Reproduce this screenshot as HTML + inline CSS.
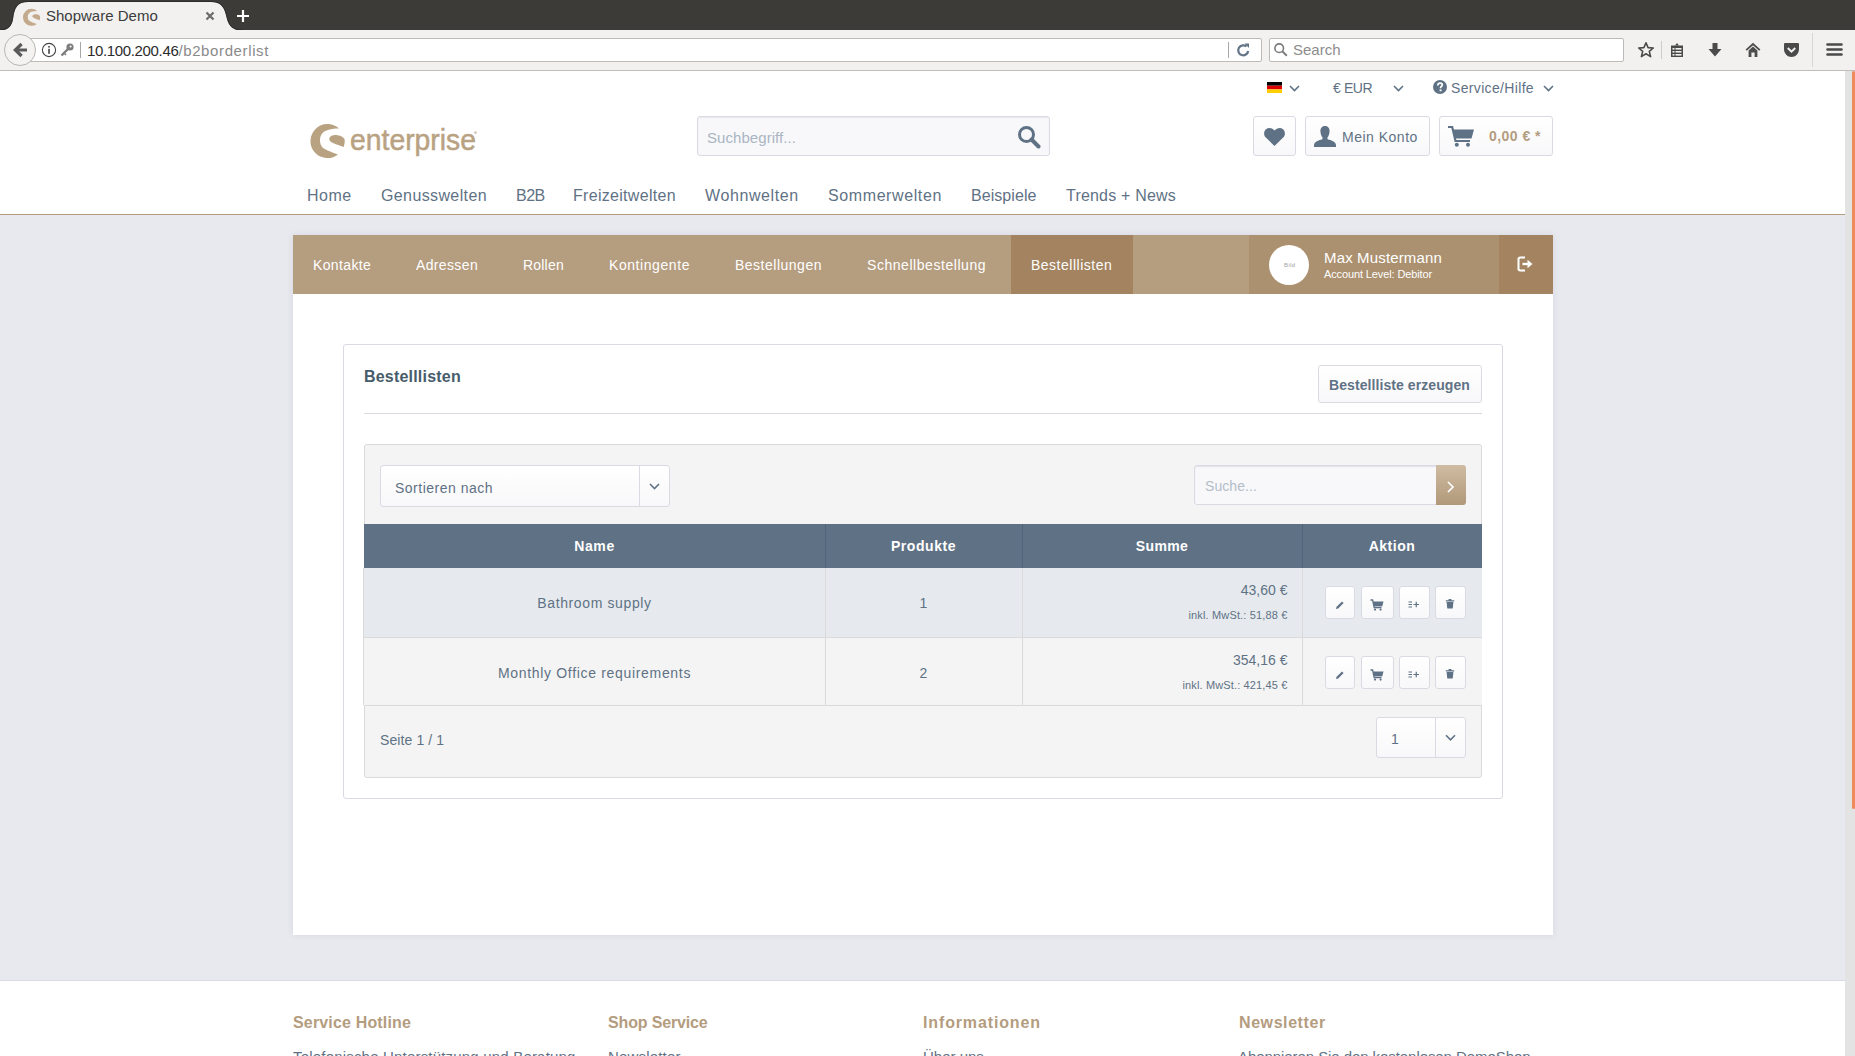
<!DOCTYPE html>
<html><head><meta charset="utf-8">
<style>
*{box-sizing:border-box;margin:0;padding:0}
html,body{width:1855px;height:1056px;overflow:hidden;font-family:"Liberation Sans",sans-serif;background:#e8e9ee}
.abs{position:absolute}
#tabbar{position:absolute;left:0;top:0;width:1855px;height:30px;background:#3c3b37}
#navbar{position:absolute;left:0;top:30px;width:1855px;height:41px;background:#f2f1f0;border-bottom:1px solid #bfbdb9}
#page{position:absolute;left:0;top:71px;width:1845px;height:985px;background:#e8e9ee;overflow:hidden}
#header{position:absolute;left:0;top:0;width:1845px;height:144px;background:#fff;border-bottom:1px solid #b49c7f}
.txt{position:absolute;white-space:nowrap;line-height:1}
.t{position:absolute;white-space:nowrap;line-height:1;color:#5f7285}
.btn{position:absolute;background:linear-gradient(#fff,#f8f8fa);border:1px solid #dadae5;border-radius:3px}
.nav{font-size:16px}
.anav{top:258.3px;font-size:14px;color:#fff}
.th{top:539.1px;font-size:14px;font-weight:bold;color:#fff;text-align:center}
.td{font-size:14px;text-align:center}
.fh{top:1014.8px;font-size:16px;font-weight:bold;color:#b49c7f}
.ft{top:1049.3px;font-size:15px;color:#5f7285}
</style></head><body>
<div id="tabbar">
  <svg class="abs" style="left:0;top:0" width="260" height="31">
    <path d="M0 30.5 C8 30.5 12 26 13 19 C14.5 8 17 2 28 2 L211 2 C221.5 2 224.5 8 226.5 17 C228.5 26 232.5 30.5 242 30.5 Z" fill="#f2f1f0"/><path d="M-1 30 C7.5 30 11.5 26 12.5 19 C14 8 16.5 1.5 28 1.5 L211 1.5 C222 1.5 225 8 227 17 C229 26 233 30 243 30" fill="none" stroke="#262522" stroke-width="1" opacity="0.7"/>
  </svg>
  <svg class="abs" style="left:23px;top:7.5px" width="18" height="18" viewBox="0 0 36 36">
    <path d="M30 8.6 A17 17 0 1 0 29 34.4 C24 32.5 17 30.5 13.5 27.5 C10.5 24.5 10.2 18 12.5 14.5 C14.5 11 20 8.6 30 8.6 Z" fill="#c3aa8c" transform="translate(-1.5,-2.5)"/>
    <path d="M20.3 18.7 C21 15.5 25 14.8 28.5 15.2 C32 15.6 35 17.5 35.6 19.5 C36 22 35.4 25 34.6 27 C31 25.5 27.5 24.5 24.5 23.2 C21.5 22 20 20.5 20.3 18.7 Z" fill="#c3aa8c" transform="translate(-1.5,-2.5)"/>
  </svg>
  <div class="txt" style="left:46px;top:8px;font-size:15px;color:#3c3c3c">Shopware Demo</div>
  <svg class="abs" style="left:205px;top:11px" width="10" height="10"><path d="M1.5 1.5 L8.5 8.5 M8.5 1.5 L1.5 8.5" stroke="#6b6b6b" stroke-width="2.2"/></svg>
  <svg class="abs" style="left:236px;top:9px" width="14" height="14"><path d="M7 1 V13 M1 7 H13" stroke="#fff" stroke-width="2.2"/></svg>
</div>
<div id="navbar">
  <!-- url bar -->
  <div class="abs" style="left:26px;top:8px;width:1236px;height:24px;background:#fff;border:1px solid #bdbbb7;border-radius:2px"></div>
  <svg class="abs" style="left:3px;top:3px" width="34" height="34">
    <circle cx="17" cy="17" r="15.5" fill="#f4f3f2" stroke="#b9b7b3" stroke-width="1"/>
    <path d="M18.6 11 L12.4 17 L18.6 23" stroke="#5a5a5a" stroke-width="3.3" fill="none"/><path d="M13 17 H24" stroke="#5a5a5a" stroke-width="3"/>
  </svg>
  <svg class="abs" style="left:41px;top:12px" width="16" height="16"><circle cx="8" cy="8" r="6.6" fill="none" stroke="#444" stroke-width="1.1"/><rect x="7.2" y="6.8" width="1.6" height="5" fill="#444"/><rect x="7.2" y="4" width="1.6" height="1.6" fill="#444"/></svg>
  <svg class="abs" style="left:59px;top:12px" width="16" height="16"><circle cx="11" cy="5" r="3.6" fill="#7d7d7d"/><circle cx="11.6" cy="4.4" r="1" fill="#fff"/><path d="M9 7 L2.5 13.5" stroke="#7d7d7d" stroke-width="2.4"/><path d="M5 11 L7 13" stroke="#7d7d7d" stroke-width="1.6"/></svg>
  <div class="abs" style="left:80px;top:12px;width:1px;height:16px;background:#a7a7a7"></div>
  <div class="txt" style="left:87px;top:13px;font-size:15px;color:#2b2b2b;letter-spacing:-0.35px">10.100.200.46<span style="color:#8a8a8a;letter-spacing:0.62px">/b2borderlist</span></div>
  <div class="abs" style="left:1228px;top:12px;width:1px;height:16px;background:#a7a7a7"></div>
  <svg class="abs" style="left:1236px;top:12px" width="16" height="16"><path d="M12.2 9 A5 5 0 1 1 10.5 4.5" fill="none" stroke="#637486" stroke-width="2.2"/><path d="M8.5 1.5 L13 1.5 L13 6 Z" fill="#637486"/></svg>
  <!-- search -->
  <div class="abs" style="left:1269px;top:8px;width:355px;height:24px;background:#fff;border:1px solid #bdbbb7;border-radius:2px"></div>
  <svg class="abs" style="left:1273px;top:12px" width="16" height="16"><circle cx="6.2" cy="6.2" r="4.3" fill="none" stroke="#7a7a7a" stroke-width="1.6"/><path d="M9.4 9.4 L13.8 13.8" stroke="#7a7a7a" stroke-width="2"/></svg>
  <div class="txt" style="left:1293px;top:12px;font-size:15px;color:#8c8c8c">Search</div>
  <!-- toolbar icons -->
  <svg class="abs" style="left:1637px;top:11px" width="18" height="18"><path d="M9 1.8 L11.1 6.6 L16.3 7 L12.3 10.4 L13.6 15.6 L9 12.8 L4.4 15.6 L5.7 10.4 L1.7 7 L6.9 6.6 Z" fill="none" stroke="#4a4a4a" stroke-width="1.6" stroke-linejoin="round"/></svg>
  <div class="abs" style="left:1661px;top:11px;width:1px;height:18px;background:#cfcdca"></div>
  <svg class="abs" style="left:1669px;top:11px" width="16" height="18"><path d="M2 4.5 H14 V16 H2 Z" fill="#4a4a4a"/><path d="M6 4.5 L8 2 L10 4.5Z" fill="#4a4a4a"/><rect x="3.5" y="7" width="2" height="1.6" fill="#f2f1f0"/><rect x="6.5" y="7" width="6" height="1.6" fill="#f2f1f0"/><rect x="3.5" y="10" width="2" height="1.6" fill="#f2f1f0"/><rect x="6.5" y="10" width="6" height="1.6" fill="#f2f1f0"/><rect x="3.5" y="13" width="2" height="1.6" fill="#f2f1f0"/><rect x="6.5" y="13" width="6" height="1.6" fill="#f2f1f0"/></svg>
  <svg class="abs" style="left:1707px;top:12px" width="16" height="16"><path d="M5.5 1 H10.5 V7 H14.5 L8 14.5 L1.5 7 H5.5 Z" fill="#4a4a4a"/></svg>
  <svg class="abs" style="left:1745px;top:12px" width="16" height="16"><path d="M1.2 8.2 L8 2 L14.8 8.2" fill="none" stroke="#4d4d4d" stroke-width="1.8"/><path d="M3.6 8.6 L8 4.6 L12.4 8.6 V15 H9.6 V10.6 H6.4 V15 H3.6 Z" fill="#4d4d4d"/></svg>
  <svg class="abs" style="left:1783px;top:12px" width="17" height="16"><path d="M1 2.2 C1 1.5 1.5 1 2.2 1 H14.8 C15.5 1 16 1.5 16 2.2 V7 C16 11.5 12.5 15 8.5 15 C4.5 15 1 11.5 1 7 Z" fill="#4a4a4a"/><path d="M4.8 6 L8.5 9.6 L12.2 6" fill="none" stroke="#f2f1f0" stroke-width="2"/></svg>
  <div class="abs" style="left:1812px;top:3px;width:1px;height:34px;background:#d8d6d3"></div>
  <svg class="abs" style="left:1826px;top:12px" width="17" height="16"><path d="M1.5 2.5 H15.5 M1.5 7.5 H15.5 M1.5 12.5 H15.5" stroke="#4a4a4a" stroke-width="2.6" stroke-linecap="round"/></svg>
</div>
<div id="page"></div>
<!-- ============ HEADER ============ -->
<div class="abs" style="left:0;top:71px;width:1845px;height:143px;background:#fff"></div>
<div class="abs" style="left:0;top:214px;width:1845px;height:1px;background:#b49c7f"></div>
<!-- top bar -->
<svg class="abs" style="left:1267px;top:82px" width="15" height="11"><rect width="15" height="3.7" fill="#000"/><rect y="3.7" width="15" height="3.7" fill="#dd0000"/><rect y="7.4" width="15" height="3.6" fill="#ffce00"/></svg>
<svg class="abs chev" style="left:1289px;top:85px" width="11" height="7"><path d="M1 1 L5.5 5.5 L10 1" fill="none" stroke="#5f7285" stroke-width="1.6"/></svg>
<div class="t" style="left:1333px;top:81px;font-size:14px;letter-spacing:-0.4px">€ EUR</div>
<svg class="abs" style="left:1393px;top:85px" width="11" height="7"><path d="M1 1 L5.5 5.5 L10 1" fill="none" stroke="#5f7285" stroke-width="1.6"/></svg>
<svg class="abs" style="left:1433px;top:80px" width="14" height="14"><circle cx="7" cy="7" r="7" fill="#5f7285"/><path d="M4.8 5.4 C4.8 3.9 5.8 3.1 7.1 3.1 C8.4 3.1 9.3 3.9 9.3 5 C9.3 6.3 7.8 6.5 7.6 7.6 L7.6 8.3" fill="none" stroke="#fff" stroke-width="1.7"/><rect x="6.6" y="9.4" width="1.9" height="1.9" fill="#fff"/></svg>
<div class="t" style="left:1451px;top:81px;font-size:14px;letter-spacing:0.34px">Service/Hilfe</div>
<svg class="abs" style="left:1543px;top:85px" width="11" height="7"><path d="M1 1 L5.5 5.5 L10 1" fill="none" stroke="#5f7285" stroke-width="1.6"/></svg>
<!-- logo -->
<svg class="abs" style="left:309px;top:120px" width="172" height="42" viewBox="0 0 172 42">
  <path d="M30 8.6 A17 17 0 1 0 29 34.4 C24 32.5 17 30.5 13.5 27.5 C10.5 24.5 10.2 18 12.5 14.5 C14.5 11 20 8.6 30 8.6 Z" fill="#b9a282"/>
  <path d="M20.3 18.7 C21 15.5 25 14.8 28.5 15.2 C32 15.6 35 17.5 35.6 19.5 C36 22 35.4 25 34.6 27 C31 25.5 27.5 24.5 24.5 23.2 C21.5 22 20 20.5 20.3 18.7 Z" fill="#b9a282"/>
  <text x="41" y="30" font-family="Liberation Sans" font-size="29" fill="#b9a282" stroke="#b9a282" stroke-width="0.5" textLength="126" lengthAdjust="spacingAndGlyphs">enterprise</text>
  <circle cx="166.5" cy="12.7" r="1.4" fill="#d5c7b3"/>
</svg>
<!-- search -->
<div class="abs" style="left:697px;top:116px;width:353px;height:40px;background:#f8f8fa;border:1px solid #dadae5;border-radius:3px;box-shadow:inset 0 1px 1px #e8e8ef"></div>
<div class="t" style="left:707px;top:129.5px;font-size:15px;color:#aab5c2;letter-spacing:0.06px">Suchbegriff...</div>
<svg class="abs" style="left:1017px;top:125px" width="24" height="24"><circle cx="9.5" cy="9.5" r="7" fill="none" stroke="#5f7285" stroke-width="3"/><path d="M14.5 14.5 L21.5 21.5" stroke="#5f7285" stroke-width="4" stroke-linecap="round"/></svg>
<!-- header buttons -->
<div class="btn" style="left:1253px;top:116px;width:43px;height:40px"></div>
<svg class="abs" style="left:1263px;top:127px" width="23" height="20" viewBox="0 0 23 20"><path d="M11.5 19 L2.8 10.6 C0.4 8.2 0.6 4.2 3 2.2 C5.4 0.2 9 0.6 11.5 3.6 C14 0.6 17.6 0.2 20 2.2 C22.4 4.2 22.6 8.2 20.2 10.6 Z" fill="#5f7285"/></svg>
<div class="btn" style="left:1305px;top:116px;width:125px;height:40px"></div>
<svg class="abs" style="left:1313px;top:125px" width="24" height="23" viewBox="0 0 24 23"><path d="M12 1 C15.3 1 16.8 3.6 16.6 6.5 C16.4 9.4 15.3 11.6 14.4 12.6 L14.6 14.2 C18.5 15.2 22.6 16.6 23 20 L23 22 L1 22 L1 20 C1.4 16.6 5.5 15.2 9.4 14.2 L9.6 12.6 C8.7 11.6 7.6 9.4 7.4 6.5 C7.2 3.6 8.7 1 12 1 Z" fill="#5f7285"/></svg>
<div class="t" style="left:1342px;top:129.5px;font-size:14px;letter-spacing:0.5px">Mein Konto</div>
<div class="btn" style="left:1439px;top:116px;width:114px;height:40px"></div>
<svg class="abs" style="left:1447px;top:125px" width="28" height="23" viewBox="0 0 28 23"><path d="M1 2 L5.2 2 L8.5 16 L23 16" fill="none" stroke="#5f7285" stroke-width="2.2"/><path d="M6 4.5 L27 4.5 L24.5 13.5 L8 13.5 Z" fill="#5f7285"/><circle cx="9.8" cy="19.8" r="2" fill="#5f7285"/><circle cx="21" cy="19.8" r="2" fill="#5f7285"/></svg>
<div class="t" style="left:1489px;top:129px;font-size:14px;font-weight:bold;color:#b49c7f;letter-spacing:0.45px">0,00 € *</div>
<!-- main nav -->
<div class="t nav" style="left:307px;top:188.4px;letter-spacing:0.5px">Home</div>
<div class="t nav" style="left:381px;top:188.4px;letter-spacing:0.38px">Genusswelten</div>
<div class="t nav" style="left:516px;top:188.4px;letter-spacing:-0.5px">B2B</div>
<div class="t nav" style="left:573px;top:188.4px;letter-spacing:0.3px">Freizeitwelten</div>
<div class="t nav" style="left:705px;top:188.4px;letter-spacing:0.6px">Wohnwelten</div>
<div class="t nav" style="left:828px;top:188.4px;letter-spacing:0.6px">Sommerwelten</div>
<div class="t nav" style="left:971px;top:188.4px;letter-spacing:0.06px">Beispiele</div>
<div class="t nav" style="left:1066px;top:188.4px;letter-spacing:0.2px">Trends + News</div>
<!-- ============ CONTENT BOX ============ -->
<div class="abs" style="left:293px;top:235px;width:1260px;height:700px;background:#fff;box-shadow:0 0 7px rgba(60,60,110,0.09)"></div>
<!-- account nav bar -->
<div class="abs" style="left:293px;top:235px;width:1260px;height:59px;background:#b59d80"></div>
<div class="abs" style="left:1011px;top:235px;width:122px;height:59px;background:#a48460"></div>
<div class="abs" style="left:1249px;top:235px;width:250px;height:59px;background:#ab916f"></div>
<div class="abs" style="left:1499px;top:235px;width:54px;height:59px;background:#a48460"></div>
<div class="t anav" style="left:313px;letter-spacing:0.37px">Kontakte</div>
<div class="t anav" style="left:416px;letter-spacing:0.36px">Adressen</div>
<div class="t anav" style="left:523px;letter-spacing:0.2px">Rollen</div>
<div class="t anav" style="left:609px;letter-spacing:0.57px">Kontingente</div>
<div class="t anav" style="left:735px;letter-spacing:0.5px">Bestellungen</div>
<div class="t anav" style="left:867px;letter-spacing:0.55px">Schnellbestellung</div>
<div class="t anav" style="left:1031px;letter-spacing:0.5px">Bestelllisten</div>
<div class="abs" style="left:1269px;top:245px;width:40px;height:40px;border-radius:50%;background:#fff"></div>
<div class="t" style="left:1284px;top:262px;font-size:6px;color:#a3a3a3;letter-spacing:0.4px">Bild</div>
<div class="t" style="left:1324px;top:249.5px;font-size:15px;color:#fff;letter-spacing:0.15px">Max Mustermann</div>
<div class="t" style="left:1324px;top:268.8px;font-size:11px;color:#fff;letter-spacing:-0.12px">Account Level: Debitor</div>
<svg class="abs" style="left:1517px;top:256px" width="17" height="16" viewBox="0 0 17 16"><path d="M8 1.5 H3.2 C2.2 1.5 1.5 2.2 1.5 3.2 V12.8 C1.5 13.8 2.2 14.5 3.2 14.5 H8" fill="none" stroke="#fff" stroke-width="2"/><path d="M5.5 8 H11.5" stroke="#fff" stroke-width="2.4"/><path d="M10.5 3.8 L15.5 8 L10.5 12.2 Z" fill="#fff"/></svg>
<!-- panel -->
<div class="abs" style="left:343px;top:344px;width:1160px;height:455px;border:1px solid #dadae5;border-radius:3px;background:#fff"></div>
<div class="t" style="left:364px;top:368.7px;font-size:16px;font-weight:bold;color:#475c6a;letter-spacing:0.2px">Bestelllisten</div>
<div class="btn" style="left:1318px;top:365px;width:164px;height:38px"></div>
<div class="t" style="left:1329px;top:378.1px;font-size:14px;font-weight:bold;letter-spacing:0.08px">Bestellliste erzeugen</div>
<div class="abs" style="left:364px;top:413px;width:1118px;height:1px;background:#dadae5"></div>
<!-- toolbar box -->
<div class="abs" style="left:364px;top:444px;width:1118px;height:334px;background:#f4f4f4;border:1px solid #dadada;border-radius:3px"></div>
<div class="btn" style="left:380px;top:465px;width:290px;height:42px"></div>
<div class="abs" style="left:639px;top:466px;width:1px;height:40px;background:#dadae5"></div>
<div class="t" style="left:395px;top:480.5px;font-size:14px;letter-spacing:0.5px">Sortieren nach</div>
<svg class="abs" style="left:649px;top:483px" width="11" height="7"><path d="M1 1 L5.5 5.5 L10 1" fill="none" stroke="#5f7285" stroke-width="1.6"/></svg>
<div class="abs" style="left:1194px;top:465px;width:244px;height:40px;background:#f8f8fa;border:1px solid #dadae5;border-radius:3px 0 0 3px;box-shadow:inset 0 1px 1px #e2e2ea"></div>
<div class="abs" style="left:1436px;top:465px;width:30px;height:40px;background:linear-gradient(#cfbca2,#b19879);border-radius:0 3px 3px 0"></div>
<div class="t" style="left:1205px;top:479.3px;font-size:14px;color:#b3bdc8;letter-spacing:0.06px">Suche...</div>
<svg class="abs" style="left:1446px;top:481px" width="9" height="12"><path d="M2 1 L7 6 L2 11" fill="none" stroke="#fff" stroke-width="1.7"/></svg>
<!-- table -->
<div class="abs" style="left:364px;top:524px;width:1118px;height:44px;background:#5f7285"></div>
<div class="abs" style="left:825px;top:524px;width:1px;height:44px;background:#51647a"></div>
<div class="abs" style="left:1022px;top:524px;width:1px;height:44px;background:#51647a"></div>
<div class="abs" style="left:1302px;top:524px;width:1px;height:44px;background:#51647a"></div>
<div class="t th" style="left:364px;width:461px;letter-spacing:0.6px">Name</div>
<div class="t th" style="left:825px;width:197px;letter-spacing:0.55px">Produkte</div>
<div class="t th" style="left:1022px;width:280px;letter-spacing:0.4px">Summe</div>
<div class="t th" style="left:1302px;width:180px;letter-spacing:0.5px">Aktion</div>
<div class="abs" style="left:364px;top:568px;width:1118px;height:70px;background:#e6eaee;border-bottom:1px solid #dadada"></div>
<div class="abs" style="left:364px;top:638px;width:1118px;height:68px;background:#f4f4f4;border-bottom:1px solid #dadada"></div>
<div class="abs" style="left:825px;top:568px;width:1px;height:137px;background:#dadada"></div>
<div class="abs" style="left:1022px;top:568px;width:1px;height:137px;background:#dadada"></div>
<div class="abs" style="left:1302px;top:568px;width:1px;height:137px;background:#dadada"></div>
<div class="abs" style="left:363px;top:568px;width:1px;height:137px;background:#dadada"></div>
<div class="t td" style="left:364px;width:461px;top:596.3px;letter-spacing:0.62px">Bathroom supply</div>
<div class="t td" style="left:825px;width:197px;top:596.3px">1</div>
<div class="t td" style="left:364px;width:461px;top:666px;letter-spacing:0.68px">Monthly Office requirements</div>
<div class="t td" style="left:825px;width:197px;top:666px">2</div>
<div class="t" style="left:1040px;width:247.5px;text-align:right;top:583.2px;font-size:14px">43,60 €</div>
<div class="t" style="left:1040px;width:247.5px;text-align:right;top:609.6px;font-size:11px;letter-spacing:0.15px">inkl. MwSt.: 51,88 €</div>
<div class="t" style="left:1040px;width:247.5px;text-align:right;top:653.1px;font-size:14px">354,16 €</div>
<div class="t" style="left:1040px;width:247.5px;text-align:right;top:679.5px;font-size:11px;letter-spacing:0.14px">inkl. MwSt.: 421,45 €</div>
<div class="btn" style="left:1324.5px;top:585.5px;width:30.5px;height:33px"></div>
<svg class="abs" style="left:1335.0px;top:599.5px" width="10" height="10" viewBox="0 0 10 10"><path d="M1 9 L1.6 6.8 L7 1.4 L8.6 3 L3.2 8.4 Z" fill="#5f7285"/></svg>
<div class="btn" style="left:1360.5px;top:585.5px;width:33px;height:33px"></div>
<svg class="abs" style="left:1370.0px;top:598.5px" width="14" height="12" viewBox="0 0 14 12"><path d="M0.5 1 L2.6 1 L4.2 8.5 L11.5 8.5" fill="none" stroke="#5f7285" stroke-width="1.3"/><path d="M3 2.6 L13.5 2.6 L12.3 7.2 L4 7.2 Z" fill="#5f7285"/><circle cx="5" cy="10.6" r="1.1" fill="#5f7285"/><circle cx="10.6" cy="10.6" r="1.1" fill="#5f7285"/></svg>
<div class="btn" style="left:1398.5px;top:585.5px;width:31px;height:33px"></div>
<svg class="abs" style="left:1408.0px;top:600.5px" width="12" height="7" viewBox="0 0 12 7"><path d="M0.5 1 H4 M0.5 3.5 H4 M0.5 6 H4" stroke="#5f7285" stroke-width="1"/><path d="M5.5 3.5 H11 M8.25 0.8 V6.2" stroke="#5f7285" stroke-width="1.2"/></svg>
<div class="btn" style="left:1434.5px;top:585.5px;width:31px;height:33px"></div>
<svg class="abs" style="left:1445.0px;top:598.0px" width="10" height="11" viewBox="0 0 10 11"><path d="M0.8 2.2 H9.2 V3.4 H0.8 Z M3.6 1 H6.4 V2.2 H3.6 Z" fill="#5f7285"/><path d="M1.6 4 H8.4 L7.8 10 C7.8 10.4 7.4 10.6 7 10.6 H3 C2.6 10.6 2.2 10.4 2.2 10 Z" fill="#5f7285"/></svg>
<div class="btn" style="left:1324.5px;top:655.5px;width:30.5px;height:33px"></div>
<svg class="abs" style="left:1335.0px;top:669.5px" width="10" height="10" viewBox="0 0 10 10"><path d="M1 9 L1.6 6.8 L7 1.4 L8.6 3 L3.2 8.4 Z" fill="#5f7285"/></svg>
<div class="btn" style="left:1360.5px;top:655.5px;width:33px;height:33px"></div>
<svg class="abs" style="left:1370.0px;top:668.5px" width="14" height="12" viewBox="0 0 14 12"><path d="M0.5 1 L2.6 1 L4.2 8.5 L11.5 8.5" fill="none" stroke="#5f7285" stroke-width="1.3"/><path d="M3 2.6 L13.5 2.6 L12.3 7.2 L4 7.2 Z" fill="#5f7285"/><circle cx="5" cy="10.6" r="1.1" fill="#5f7285"/><circle cx="10.6" cy="10.6" r="1.1" fill="#5f7285"/></svg>
<div class="btn" style="left:1398.5px;top:655.5px;width:31px;height:33px"></div>
<svg class="abs" style="left:1408.0px;top:670.5px" width="12" height="7" viewBox="0 0 12 7"><path d="M0.5 1 H4 M0.5 3.5 H4 M0.5 6 H4" stroke="#5f7285" stroke-width="1"/><path d="M5.5 3.5 H11 M8.25 0.8 V6.2" stroke="#5f7285" stroke-width="1.2"/></svg>
<div class="btn" style="left:1434.5px;top:655.5px;width:31px;height:33px"></div>
<svg class="abs" style="left:1445.0px;top:668.0px" width="10" height="11" viewBox="0 0 10 11"><path d="M0.8 2.2 H9.2 V3.4 H0.8 Z M3.6 1 H6.4 V2.2 H3.6 Z" fill="#5f7285"/><path d="M1.6 4 H8.4 L7.8 10 C7.8 10.4 7.4 10.6 7 10.6 H3 C2.6 10.6 2.2 10.4 2.2 10 Z" fill="#5f7285"/></svg>

<!-- pager -->
<div class="t" style="left:380px;top:733.2px;font-size:14px;letter-spacing:0.1px">Seite 1 / 1</div>
<div class="btn" style="left:1376px;top:717px;width:90px;height:41px"></div>
<div class="abs" style="left:1435px;top:718px;width:1px;height:39px;background:#dadae5"></div>
<div class="t" style="left:1391px;top:732.3px;font-size:14px">1</div>
<svg class="abs" style="left:1445px;top:734px" width="11" height="8"><path d="M1 1.2 L5.5 5.8 L10 1.2" fill="none" stroke="#5f7285" stroke-width="1.6"/></svg>
<!-- ============ FOOTER ============ -->
<div class="abs" style="left:0;top:980px;width:1845px;height:76px;background:#fff;border-top:1px solid #dadae5"></div>
<div class="t fh" style="left:293px;letter-spacing:0.16px">Service Hotline</div>
<div class="t fh" style="left:608px;letter-spacing:-0.15px">Shop Service</div>
<div class="t fh" style="left:923px;letter-spacing:0.86px">Informationen</div>
<div class="t fh" style="left:1239px;letter-spacing:0.58px">Newsletter</div>
<div class="t ft" style="left:293px;letter-spacing:0.19px">Telefonische Unterstützung und Beratung</div>
<div class="t ft" style="left:608px;letter-spacing:0.17px">Newsletter</div>
<div class="t ft" style="left:923px">Über uns</div>
<div class="t ft" style="left:1238px;letter-spacing:-0.07px">Abonnieren Sie den kostenlosen DemoShop</div>
<!-- scrollbar -->
<div class="abs" style="left:1845px;top:71px;width:10px;height:985px;background:#e3e3e3"></div>
<div class="abs" style="left:1852px;top:71px;width:3px;height:738px;background:#ef8a5d;border-radius:2px"></div>
</body></html>
